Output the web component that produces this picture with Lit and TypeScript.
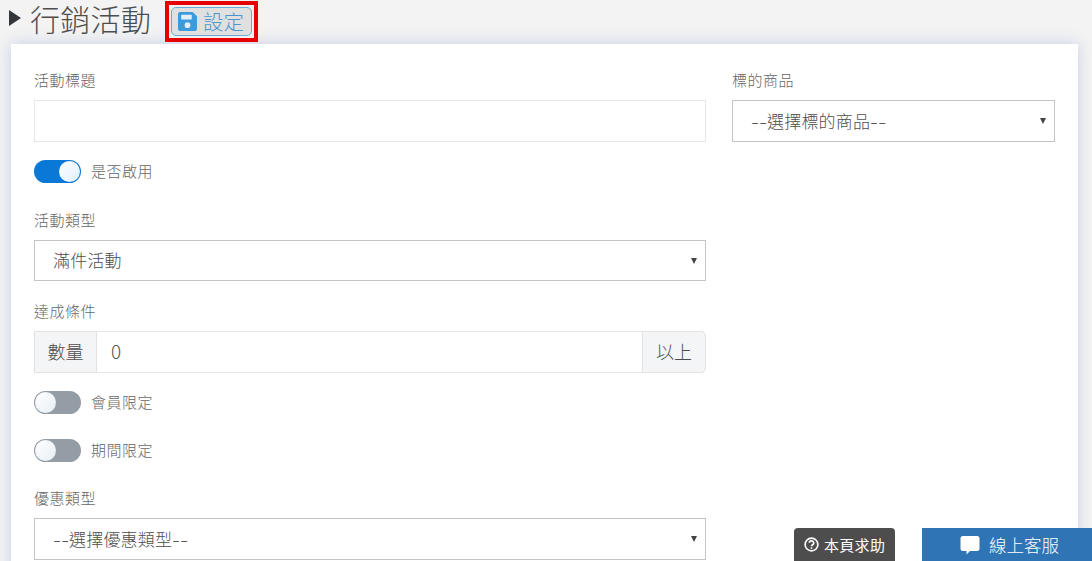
import { LitElement, html, css } from "lit";
import { customElement } from "lit/decorators.js";

@customElement("app-root")
export class AppRoot extends LitElement {
  static styles = css`
    :host {
      display: block;
      position: relative;
      width: 1092px;
      height: 561px;
      overflow: hidden;
      background: #f3f3f3;
      font-family: "Noto Sans CJK TC", "Noto Sans", sans-serif;
      color: #666;
      font-size: 14px;
    }
    * { box-sizing: border-box; }
    .head {
      height: 44px;
      display: flex;
      align-items: flex-start;
      padding-left: 9px;
    }
    .tri {
      width: 0;
      height: 0;
      margin-top: 10px;
      border-left: 12px solid #33373c;
      border-top: 8px solid transparent;
      border-bottom: 8px solid transparent;
    }
    h1 {
      margin: 0 0 0 9px;
      width: 121px;
      font-size: 30px;
      line-height: 36px;
      letter-spacing: 0.3px;
      font-weight: 300;
      color: #4d4d4d;
      white-space: nowrap;
    }
    .mark {
      margin: 1px 0 0 14px;
      border: 4px solid #e60000;
      width: 93px;
      height: 41px;
      padding: 2px;
      background: #f0f0f0;
    }
    .save {
      width: 81px;
      height: 29px;
      display: flex;
      align-items: center;
      gap: 6px;
      padding: 0 0 0 6px;
      border: 1px solid #6fa8d0;
      border-radius: 5px;
      background: #e0e0e0;
      color: #4b95cc;
      font-family: inherit;
      font-size: 20.5px;
      font-weight: 300;
      line-height: 1;
    }
    .save svg { width: 19px; height: 19px; flex: none; }
    .card {
      margin-left: 11px;
      width: 1067px;
      height: 540px;
      background: #fff;
      box-shadow: 0 0 14px rgba(110, 130, 200, 0.32);
      padding: 27px 23px 0;
      display: flex;
      gap: 26px;
      align-items: flex-start;
    }
    .main { width: 672px; flex: none; }
    .side { width: 323px; flex: none; }
    label.cap {
      display: block;
      height: 20px;
      line-height: 18px;
      font-size: 15px;
      letter-spacing: 0.5px;
      font-weight: 300;
      color: #666;
      margin-bottom: 9px;
    }
    input.text {
      display: block;
      width: 100%;
      height: 42px;
      border: 1px solid #e8e8e8;
      outline: none;
      background: #fff;
      font: inherit;
    }
    .switch-row {
      display: flex;
      align-items: center;
      gap: 10px;
      height: 23px;
      margin-top: 18px;
      font-size: 15px;
      letter-spacing: 0.5px;
      font-weight: 300;
      color: #666;
    }
    .switch-row span.t { line-height: 21px; height: 21px; margin-top: -2px; }
    .switch-row.tight { margin-top: 25px; }
    .sw {
      position: relative;
      width: 47px;
      height: 23px;
      border-radius: 12px;
      background: #949ca5;
      flex: none;
    }
    .sw::after {
      content: "";
      position: absolute;
      top: 1px;
      left: 1px;
      width: 21px;
      height: 21px;
      border-radius: 50%;
      background: linear-gradient(135deg, #fff, #e6eef5);
    }
    .sw.on { background: #0a78d6; }
    .sw.on::after { left: 25px; background: linear-gradient(135deg, #fff, #dff0fb); }
    .block { margin-top: 28px; }
    .block.near { margin-top: 21px; }
    .block.last { margin-top: 27px; }
    .select {
      position: relative;
      display: flex;
      align-items: center;
      height: 41px;
      border: 1px solid #c4c4c4;
      background: #fff;
      padding: 0 24px 2px 18px;
      font-size: 17px;
      font-weight: 300;
      letter-spacing: 0.2px;
      color: #4d4d4d;
      white-space: nowrap;
    }
    .select.tall { height: 42px; }
    .dash {
      display: inline-block;
      width: 16px;
      transform: scaleX(1.4);
      transform-origin: left center;
    }
    .arrow {
      position: absolute;
      right: 8px;
      top: 50%;
      margin-top: -3px;
      width: 0;
      height: 0;
      border-left: 3px solid transparent;
      border-right: 3px solid transparent;
      border-top: 6px solid #444;
    }
    .group { display: flex; height: 42px; }
    .addon {
      display: flex;
      align-items: center;
      justify-content: center;
      height: 100%;
      padding-bottom: 2px;
      background: #f4f5f7;
      border: 1px solid #e2e2e2;
      font-size: 18px;
      font-weight: 300;
      color: #4d4d4d;
      flex: none;
    }
    .addon.l { width: 63px; }
    .addon.r { width: 64px; border-radius: 0 5px 5px 0; }
    .group input {
      flex: 1;
      min-width: 0;
      border: 1px solid #e8e8e8;
      border-width: 1px 0;
      padding: 0 14px 3px;
      font-family: inherit;
      font-size: 19px;
      font-weight: 300;
      color: #555;
      outline: none;
    }
    .help {
      position: absolute;
      left: 794px;
      top: 528px;
      width: 101px;
      height: 33px;
      border-radius: 4px 4px 0 0;
      background: #4d4d4d;
      color: #fff;
      display: flex;
      align-items: center;
      gap: 5px;
      padding-left: 10px;
      font-size: 15px;
      letter-spacing: 0.3px;
    }
    .help svg { width: 15px; height: 15px; flex: none; }
    .chat {
      position: absolute;
      left: 922px;
      top: 528px;
      width: 170px;
      height: 33px;
      background: #2f75b5;
      color: #fff;
      display: flex;
      align-items: center;
      gap: 9px;
      padding-left: 38px;
      font-size: 17.5px;
      font-weight: 300;
    }
    .chat svg { width: 20px; height: 20px; flex: none; }
  `;

  render() {
    return html`
      <header class="head">
        <span class="tri"></span>
        <h1>行銷活動</h1>
        <div class="mark">
          <button class="save">
            <svg viewBox="1 1 18 18">
              <path fill="#3c9bdc" d="M3 1h12l4 4v12a2 2 0 0 1-2 2H3a2 2 0 0 1-2-2V3a2 2 0 0 1 2-2z" />
              <rect x="4" y="3.500" width="10" height="4.500" rx=".6" fill="#e6eef5" />
              <circle cx="10" cy="13.500" r="2.700" fill="#e6eef5" />
            </svg>
            <span>設定</span>
          </button>
        </div>
      </header>
      <section class="card">
        <div class="main">
          <label class="cap">活動標題</label>
          <input class="text" type="text" />
          <div class="switch-row"><span class="sw on"></span><span class="t">是否啟用</span></div>
          <div class="block">
            <label class="cap">活動類型</label>
            <div class="select" role="combobox">滿件活動<i class="arrow"></i></div>
          </div>
          <div class="block near">
            <label class="cap">達成條件</label>
            <div class="group">
              <span class="addon l">數量</span>
              <input type="text" value="0" />
              <span class="addon r">以上</span>
            </div>
          </div>
          <div class="switch-row"><span class="sw"></span><span class="t">會員限定</span></div>
          <div class="switch-row tight"><span class="sw"></span><span class="t">期間限定</span></div>
          <div class="block last">
            <label class="cap">優惠類型</label>
            <div class="select tall" role="combobox"><span class="dash">--</span>選擇優惠類型<span class="dash">--</span><i class="arrow"></i></div>
          </div>
        </div>
        <div class="side">
          <label class="cap">標的商品</label>
          <div class="select tall" role="combobox"><span class="dash">--</span>選擇標的商品<span class="dash">--</span><i class="arrow"></i></div>
        </div>
      </section>
      <div class="help">
        <svg viewBox="0 0 16 16" fill="none" stroke="#fff" stroke-width="1.8">
          <circle cx="8" cy="8" r="6.800" />
          <path d="M5.600 6.200a2.400 2.200 0 1 1 3.600 2c-.8.5-1.200.9-1.200 1.700" />
          <path d="M8 11v1.600" />
        </svg>
        <span>本頁求助</span>
      </div>
      <div class="chat">
        <svg viewBox="0 0 20 20"><path fill="#fff" d="M3 1h14a2.500 2.500 0 0 1 2.500 2.500v10A2.500 2.500 0 0 1 17 16h-7l-3.500 3.500V16H3a2.500 2.500 0 0 1-2.500-2.500v-10A2.500 2.500 0 0 1 3 1z" /></svg>
        <span>線上客服</span>
      </div>
    `;
  }
}
